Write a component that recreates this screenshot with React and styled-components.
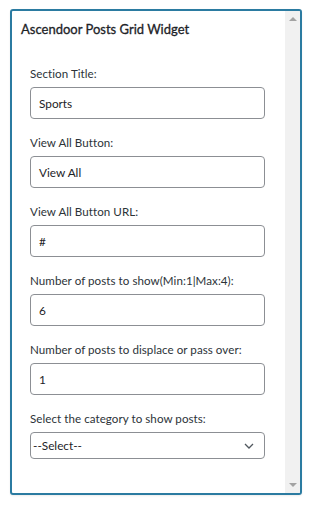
import styled, { createGlobalStyle } from "styled-components";

const GlobalStyle = createGlobalStyle`
  body {
    margin: 0;
    background: #fff;
    font-family: Lato, "Open Sans", sans-serif;
  }
`;

const Page = styled.div`
  padding: 9px 10px;
`;

const Frame = styled.div`
  width: 292px;
  height: 486px;
  box-sizing: border-box;
  border: 2px solid #2b7ba1;
  border-radius: 3px;
  display: flex;
  overflow: hidden;
  box-shadow: 0 1px 2px rgba(0, 0, 0, 0.08);
`;

const Content = styled.div`
  flex: 1;
  padding: 9px 0 0 9px;
`;

const Title = styled.h3`
  margin: 0 0 28px;
  font-size: 13px;
  line-height: 18px;
  font-weight: 400;
  color: #1d2327;
  -webkit-text-stroke: 0.3px #1d2327;
`;

const Form = styled.div`
  padding-left: 9px;
  display: flex;
  flex-direction: column;
  gap: 16px;
`;

const Field = styled.div`
  display: flex;
  flex-direction: column;
  gap: 5px;
`;

const Label = styled.label`
  font-size: 11.6px;
  line-height: 16px;
  color: #2c3338;
  letter-spacing: 0.05px;
`;

const Input = styled.div`
  width: 235px;
  height: 32px;
  box-sizing: border-box;
  border: 1px solid #8c8f94;
  border-radius: 4px;
  padding: 0 8px;
  display: flex;
  align-items: center;
  font-size: 11.8px;
  color: #1d2327;
`;

const Select = styled(Input)`
  height: 27px;
  padding: 0 10px 0 2px;
  justify-content: space-between;
`;

const Scrollbar = styled.div`
  width: 15px;
  background: #f1f1f1;
  display: flex;
  flex-direction: column;
  justify-content: space-between;
  align-items: center;
  padding: 6px 0;
  box-sizing: border-box;
`;

const Arrow = styled.span`
  width: 0;
  height: 0;
  border-left: 4px solid transparent;
  border-right: 4px solid transparent;
  ${(p) =>
    p.down
      ? "border-top: 4px solid #a3a3a3;"
      : "border-bottom: 4px solid #a3a3a3;"}
`;

const fields = [
  ["Section Title:", "Sports"],
  ["View All Button:", "View All"],
  ["View All Button URL:", "#"],
  ["Number of posts to show(Min:1|Max:4):", "6"],
  ["Number of posts to displace or pass over:", "1"],
];

const App = () => {
  return (
    <Page>
      <GlobalStyle />
      <Frame>
        <Content>
          <Title>Ascendoor Posts Grid Widget</Title>
          <Form>
            {fields.map(([label, value]) => (
              <Field key={label}>
                <Label>{label}</Label>
                <Input>{value}</Input>
              </Field>
            ))}
            <Field>
              <Label>Select the category to show posts:</Label>
              <Select>
                <span>--Select--</span>
                <svg width="10" height="6" viewBox="0 0 10 6">
                  <path d="M1 1l4 4 4-4" fill="none" stroke="#50575e" strokeWidth="1.3" />
                </svg>
              </Select>
            </Field>
          </Form>
        </Content>
        <Scrollbar>
          <Arrow />
          <Arrow down />
        </Scrollbar>
      </Frame>
    </Page>
  );
};

export default App;
